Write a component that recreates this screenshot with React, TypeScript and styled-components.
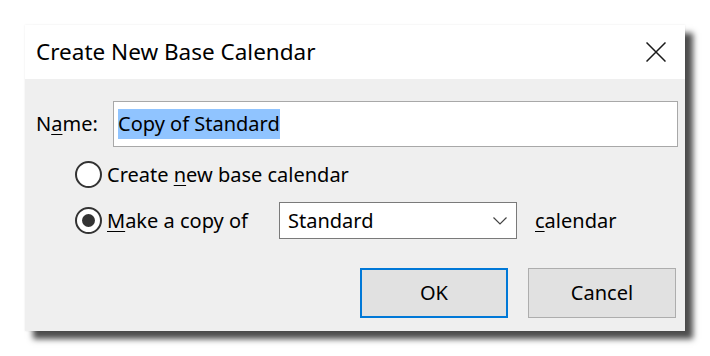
import React from 'react';
import styled, { createGlobalStyle } from 'styled-components';

const GlobalStyle = createGlobalStyle`
    html, body {
        margin: 0;
        background: #ffffff;
        font-family: 'Noto Sans', 'Open Sans', sans-serif;
        color: #000;
    }
`;

const Page = styled.div`
    padding: 25px 0 25px 25px;
`;

const Dialog = styled.div`
    width: 660px;
    height: 306px;
    display: flex;
    flex-direction: column;
    box-shadow: 8px 8px 6px rgba(0, 0, 0, 0.7), 0 0 2px rgba(0, 0, 0, 0.08);
`;

const TitleBar = styled.div`
    height: 54px;
    flex: 0 0 54px;
    background: #ffffff;
    display: flex;
    align-items: center;
    justify-content: space-between;
    padding: 0 19px 0 11px;
`;

const Title = styled.div`
    font-size: 22.5px;
    line-height: 1;
`;

const CloseButton = styled.div`
    width: 20px;
    height: 20px;
    display: flex;
`;

const Body = styled.div`
    flex: 1;
    background: #efefef;
    display: flex;
    flex-direction: column;
    padding: 22px 7px 0 11px;
    font-size: 20px;
    line-height: 1;
`;

const NameRow = styled.div`
    display: flex;
    align-items: center;
    height: 46px;
`;

const Label = styled.label`
    width: 77px;
    flex: 0 0 77px;
`;

const TextBox = styled.div`
    flex: 1;
    height: 100%;
    box-sizing: border-box;
    border: 1px solid #a8a8a8;
    background: #ffffff;
    padding: 4px;
    display: flex;
    align-items: center;
`;

const Selected = styled.span`
    background: #90c4ff;
    height: 30px;
    display: flex;
    align-items: center;
`;

const OptionRow = styled.div<{ $height: number }>`
    display: flex;
    align-items: center;
    height: ${p => p.$height}px;
    margin-top: 14px;
    padding-left: 39px;
`;

const RadioOption = styled.div<{ $width?: number }>`
    display: flex;
    align-items: center;
    gap: 5px;
    width: ${p => (p.$width ? `${p.$width}px` : 'auto')};
`;

const RadioCircle = styled.span<{ $checked?: boolean }>`
    width: 27px;
    height: 27px;
    box-sizing: border-box;
    border-radius: 50%;
    border: 2px solid #333333;
    background: #ffffff;
    display: flex;
    align-items: center;
    justify-content: center;

    &::after {
        content: '';
        width: 13px;
        height: 13px;
        border-radius: 50%;
        background: #333333;
        display: ${p => (p.$checked ? 'block' : 'none')};
    }
`;

const Key = styled.u`
    text-underline-offset: 3px;
    text-decoration-thickness: 1px;
`;

const Select = styled.div`
    width: 238px;
    height: 37px;
    box-sizing: border-box;
    border: 1px solid #7a7a7a;
    background: #ffffff;
    display: flex;
    align-items: center;
    justify-content: space-between;
    padding: 0 9px 0 8px;
`;

const After = styled.span`
    margin-left: 18px;
`;

const ButtonRow = styled.div`
    display: flex;
    justify-content: flex-end;
    gap: 20px;
    margin-top: 29px;
    padding-right: 2px;
`;

const Button = styled.div<{ $default?: boolean }>`
    width: 148px;
    height: 50px;
    box-sizing: border-box;
    background: #e1e1e1;
    border: ${p => (p.$default ? '2px solid #0078d7' : '1px solid #adadad')};
    display: flex;
    align-items: center;
    justify-content: center;
`;

export default function App() {
    return (
        <Page>
            <GlobalStyle />
            <Dialog>
                <TitleBar>
                    <Title>Create New Base Calendar</Title>
                    <CloseButton>
                        <svg width="20" height="20" viewBox="0 0 20 20">
                            <path d="M0.5 0.5 L19.5 19.5 M19.5 0.5 L0.5 19.5" stroke="#1a1a1a" strokeWidth="1.5" />
                        </svg>
                    </CloseButton>
                </TitleBar>
                <Body>
                    <NameRow>
                        <Label>N<Key>a</Key>me:</Label>
                        <TextBox>
                            <Selected>Copy of Standard</Selected>
                        </TextBox>
                    </NameRow>
                    <OptionRow $height={27}>
                        <RadioOption>
                            <RadioCircle />
                            <span>Create <Key>n</Key>ew base calendar</span>
                        </RadioOption>
                    </OptionRow>
                    <OptionRow $height={37}>
                        <RadioOption $width={204}>
                            <RadioCircle $checked />
                            <span><Key>M</Key>ake a copy of</span>
                        </RadioOption>
                        <Select>
                            <span>Standard</span>
                            <svg width="14" height="8" viewBox="0 0 14 8">
                                <polyline points="0.5,0.5 7,7 13.5,0.5" fill="none" stroke="#444" strokeWidth="1.2" />
                            </svg>
                        </Select>
                        <After><Key>c</Key>alendar</After>
                    </OptionRow>
                    <ButtonRow>
                        <Button $default>OK</Button>
                        <Button>Cancel</Button>
                    </ButtonRow>
                </Body>
            </Dialog>
        </Page>
    );
}
